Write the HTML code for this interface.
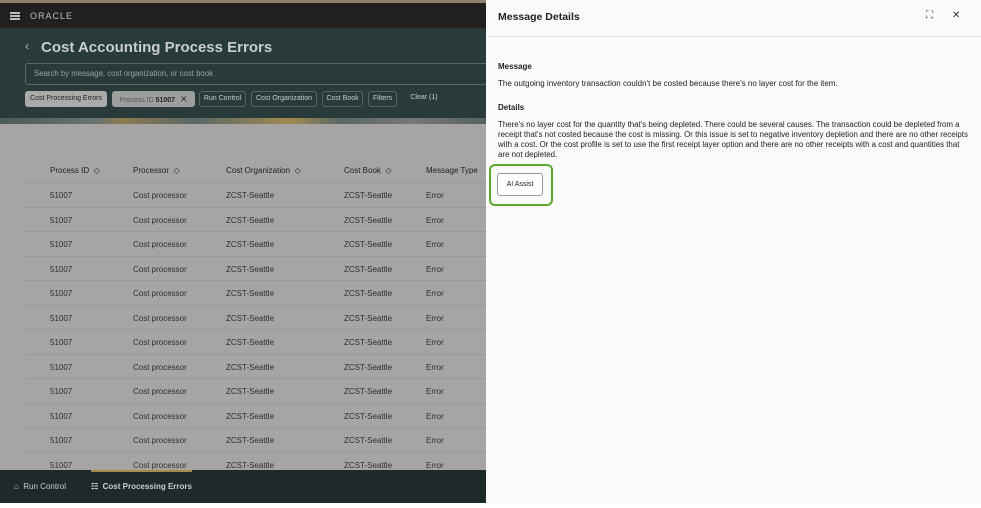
<!DOCTYPE html>
<html><head><meta charset="utf-8"><style>
*{margin:0;padding:0;box-sizing:border-box}
body{width:981px;height:508px;overflow:hidden;background:#fff;font-family:"Liberation Sans",sans-serif;position:relative}
.abs{position:absolute}
#left{left:0;top:0;width:486px;height:503px;background:#a6a5a3;overflow:hidden}
.top{left:0;top:0;width:486px;height:3px;background:#8f8270}
.hdr{left:0;top:3px;width:486px;height:25px;background:#22201e}
.teal{left:0;top:28px;width:486px;height:90px;background:#283a3a}
.band{left:0;top:118px;width:486px;height:6px;background:linear-gradient(90deg,#4a5a58,#6a7472 20%,#8c7a50 25%,#5a6866 40%,#a08a50 60%,#5a6866 70%,#777 85%,#55625f)}
.chip{position:absolute;top:91px;height:16px;border:1px solid #56625f;border-radius:3px;font-size:7px;color:#c8ccca;line-height:14px;padding:0;text-align:center;white-space:nowrap;overflow:hidden}
.row{position:absolute;left:25px;width:461px;height:24.5px;border-bottom:1px solid #9a9997;font-size:8px;color:#2e2e2e}
.row span{position:absolute;top:8px}
.bot{left:0;top:470px;width:486px;height:33px;background:#1e2a2a;color:#c9cfcd;font-size:8px}
#panel{left:486px;top:0;width:495px;height:503px;background:#fafaf9;color:#222}
</style></head><body>
<div id="left" class="abs">
<div class="abs top"></div>
<div class="abs hdr">
<div class="abs" style="left:10px;top:9px;width:10px;height:1.5px;background:#bbb;box-shadow:0 3px 0 #bbb,0 6px 0 #bbb"></div>
<div class="abs" style="left:30px;top:8px;font-size:9px;letter-spacing:1px;color:#bdbdbd">ORACLE</div>
</div>
<div class="abs teal">
<div class="abs" style="left:25px;top:11px;color:#bbb;font-size:12px">‹</div>
<div class="abs" style="left:41px;top:11px;color:#c9cecc;font-size:15px;font-weight:bold">Cost Accounting Process Errors</div>
<div class="abs" style="left:25px;top:35px;width:470px;height:22px;border:1px solid #5a6866;border-radius:3px;color:#9aa3a1;font-size:7.8px;padding:5px 8px">Search by message, cost organization, or cost book</div>
</div>
<div class="chip" style="left:25px;width:82px;background:#aaaaa8;color:#222;border-color:#aaa">Cost Processing Errors</div>
<div class="chip" style="left:112px;width:83px;background:#9c9e9c;color:#555;border-color:#9c9e9c">Process ID <b style="color:#222">51007</b> <span style="color:#333;font-size:9px;margin-left:3px">✕</span></div>
<div class="chip" style="left:199px;width:47px">Run Control</div>
<div class="chip" style="left:251px;width:66px">Cost Organization</div>
<div class="chip" style="left:322px;width:41px">Cost Book</div>
<div class="chip" style="left:368px;width:29px">Filters</div>
<div class="chip" style="left:405px;width:38px;border:none">Clear (1)</div>
<div class="abs band"></div>
<div class="row" style="top:158px;color:#222"><span style="left:25px">Process ID &nbsp;◇</span><span style="left:108px">Processor &nbsp;◇</span><span style="left:201px">Cost Organization &nbsp;◇</span><span style="left:319px">Cost Book &nbsp;◇</span><span style="left:401px">Message Type</span></div>
<div id="rows"></div>
<div class="abs bot">
<div class="abs" style="left:14px;top:12px">⌂ &nbsp;Run Control</div>
<div class="abs" style="left:91px;top:12px;font-weight:bold">☷ &nbsp;Cost Processing Errors</div>
<div class="abs" style="left:91px;top:0;width:101px;height:2px;background:#a88a4c"></div>
</div>
</div>
<div id="panel" class="abs">
<div class="abs" style="left:12px;top:11px;font-size:10.5px;font-weight:bold">Message Details</div>
<div class="abs" style="left:440px;top:10px;font-size:10px;color:#444">⛶</div>
<div class="abs" style="left:466px;top:10px;font-size:10px;color:#333">✕</div>
<div class="abs" style="left:0;top:36px;width:495px;height:1px;background:#e6e6e4"></div>
<div class="abs" style="left:12px;top:62px;font-size:8px;font-weight:bold">Message</div>
<div class="abs" style="left:12px;top:79px;font-size:8px">The outgoing inventory transaction couldn't be costed because there's no layer cost for the item.</div>
<div class="abs" style="left:12px;top:103px;font-size:8px;font-weight:bold">Details</div>
<div class="abs" style="left:12px;top:120px;width:470px;font-size:7.9px;line-height:10px">There's no layer cost for the quantity that's being depleted. There could be several causes. The transaction could be depleted from a receipt that's not costed because the cost is missing. Or this issue is set to negative inventory depletion and there are no other receipts with a cost. Or the cost profile is set to use the first receipt layer option and there are no other receipts with a cost and quantities that are not depleted.</div>
<div class="abs" style="left:3px;top:164px;width:64px;height:42px;border:2px solid #5aa832;border-radius:6px"></div>
<div class="abs" style="left:11px;top:173px;width:46px;height:23px;border:1px solid #999;border-radius:3px;background:#fff;font-size:7px;text-align:center;line-height:21px">AI Assist</div>
</div>
<script>
var h='';for(var i=0;i<12;i++){h+='<div class="row" style="top:'+(183+i*24.5)+'px"><span style="left:25px">51007</span><span style="left:108px">Cost processor</span><span style="left:201px">ZCST-Seattle</span><span style="left:319px">ZCST-Seattle</span><span style="left:401px">Error</span></div>';}
document.getElementById('rows').innerHTML=h;
</script>
</body></html>
